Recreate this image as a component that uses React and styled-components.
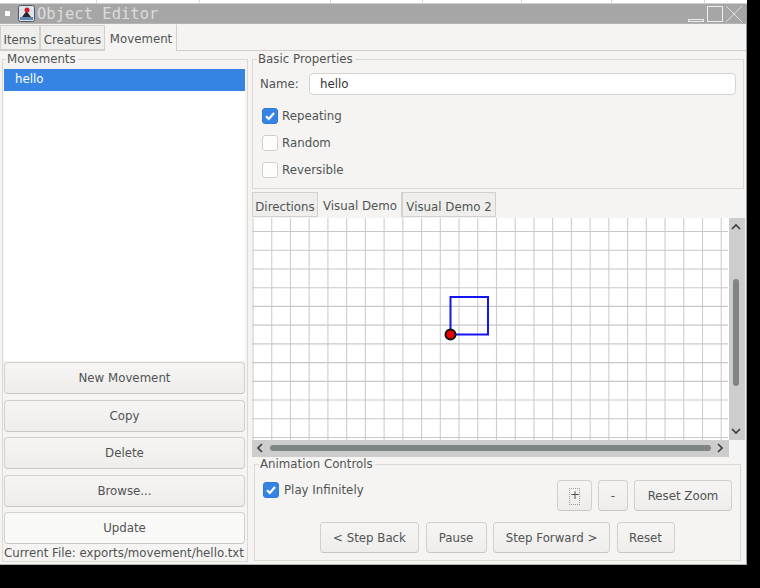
import React from 'react';
import styled, { createGlobalStyle } from 'styled-components';

const TEXT_SIZE = '11.8px';

const GlobalStyle = createGlobalStyle`
  html, body { margin: 0; padding: 0; background: #000; }
  body { font-family: "DejaVu Sans", "Liberation Sans", sans-serif; font-size: ${TEXT_SIZE}; color: #505353; }
`;

// --- desktop ---
const Desktop = styled.div`
  width: 760px;
  height: 588px;
  background: #000;
  overflow: hidden;
`;
const BehindStrip = styled.div`
  display: flex;
  width: 747px;
  height: 4px;
  box-sizing: border-box;
  background: #fff;
  border-bottom: 1px solid #d0d0d0;
`;
const BehindCell = styled.div`
  width: ${p => p.$w}px;
  border-right: 1px solid #d8d8d8;
`;
const Win = styled.div`
  width: 747px;
  height: 561px;
  box-sizing: border-box;
  background: #f5f4f2;
  border-right: 1px solid #9a9a9a;
  border-bottom: 1px solid #b5b5b5;
  display: flex;
  flex-direction: column;
`;

// --- title bar ---
const TitleBar = styled.div`
  height: 19px;
  background: #a6a6a6;
  display: flex;
  align-items: center;
  color: #dcdcdc;
  flex: none;
  border-bottom: 1px solid #b4b4b4;
`;
const MenuDot = styled.span`
  width: 5px;
  height: 5px;
  background: #fff;
  margin-left: 5px;
`;
const TitleText = styled.span`
  font-family: "DejaVu Sans Mono", monospace;
  font-size: 15.5px;
  margin-left: 2px;
  flex: 1;
`;
const WinButtons = styled.svg`
  display: block;
  margin-right: 1px;
`;
const AppIconSvg = styled.svg`
  display: block;
  margin-left: 8px;
`;

// --- tabs ---
const TabBar = styled.div`
  display: flex;
  align-items: flex-end;
  height: ${p => p.$h}px;
  flex: none;
  border-bottom: 1px solid ${p => (p.$plain ? 'transparent' : '#cfccc8')};
  box-sizing: border-box;
`;
const Tab = styled.div`
  box-sizing: border-box;
  width: ${p => p.$w}px;
  height: ${p => (p.$active ? p.$h + 1 : p.$h - 1)}px;
  margin-bottom: ${p => (p.$active ? -1 : 0)}px;
  background: ${p => (p.$active ? '#f5f4f2' : '#efeeec')};
  border: 1px solid #d3d0cc;
  border-bottom: ${p => (p.$active ? 'none' : '1px solid #d3d0cc')};
  border-top-color: ${p => (p.$active ? 'transparent' : '#d3d0cc')};
  border-left-color: ${p => (p.$active ? 'transparent' : '#d3d0cc')};
  line-height: ${p => p.$h + 3}px;
  text-align: center;
  white-space: nowrap;
  overflow: hidden;
`;

// --- body ---
const Body = styled.div`
  flex: 1;
  min-height: 0;
  display: flex;
  gap: 4px;
  padding: 2px;
`;
const Group = styled.fieldset`
  margin: 0;
  min-width: 0;
  box-sizing: border-box;
  border: 1px solid #dcd9d5;
  padding: ${p => p.$pad};
  display: flex;
  flex-direction: column;
`;
const GroupTitle = styled.legend`
  padding: 0 2px 0 1px;
  margin-left: ${p => p.$x}px;
  line-height: 12px;
`;
const LeftGroup = styled(Group)`
  width: 246px;
  height: 509px;
  flex: none;
`;
const MovementList = styled.div`
  flex: 1;
  background: #fff;
`;
const ListRow = styled.div`
  height: 22px;
  line-height: 21px;
  padding-left: 11px;
  background: #3584e4;
  color: #fff;
`;
const ButtonStack = styled.div`
  display: flex;
  flex-direction: column;
  gap: 5.5px;
  margin-top: 1px;
`;
const Btn = styled.div`
  box-sizing: border-box;
  width: ${p => (p.$w ? `${p.$w}px` : 'auto')};
  height: ${p => p.$h || 32}px;
  line-height: ${p => (p.$h || 32) - 1}px;
  text-align: center;
  border: 1px solid #d3d0cb;
  border-bottom-color: #c9c6c1;
  border-radius: 4px;
  background: ${p => (p.$flat ? '#f9f9f8' : 'linear-gradient(#f6f5f4, #eeedeb)')};
  white-space: nowrap;
`;
const CurrentFile = styled.div`
  line-height: 16px;
  margin-top: 1px;
  white-space: nowrap;
`;

const RightCol = styled.div`
  flex: 1;
  min-width: 0;
  display: flex;
  flex-direction: column;
`;
const BasicGroup = styled(Group)`
  height: 136px;
  flex: none;
`;
const NameRow = styled.div`
  display: flex;
  align-items: center;
  height: 22px;
  margin-bottom: 13px;
`;
const NameLabel = styled.span`
  width: 49px;
  flex: none;
`;
const NameInput = styled.div`
  flex: 1;
  box-sizing: border-box;
  height: 22px;
  margin-right: 7px;
  padding-left: 10px;
  line-height: 21px;
  background: #fff;
  border: 1px solid #d6d3cf;
  border-radius: 4px;
  color: #333;
`;
const CheckRow = styled.div`
  display: flex;
  align-items: center;
  gap: ${p => p.$gap}px;
  height: 15px;
  margin-left: ${p => p.$ml || 0}px;
  margin-top: ${p => p.$mt || 0}px;
  margin-bottom: ${p => p.$mb || 0}px;
`;
const Box = styled.span`
  box-sizing: border-box;
  width: 16px;
  height: 16px;
  flex: none;
  border-radius: 3px;
  border: 1px solid ${p => (p.$on ? '#2f7ad8' : '#d3d0cb')};
  background: ${p => (p.$on ? '#3584e4' : '#fdfdfc')};
  display: flex;
  align-items: center;
  justify-content: center;
`;

const DemoPane = styled.div`
  display: flex;
  flex-direction: column;
  flex: none;
  margin-top: 2px;
`;
const ScrollArea = styled.div`
  display: grid;
  grid-template-columns: 477px 16px;
  grid-template-rows: 222px 17px;
`;
const GridCanvas = styled.svg`
  display: block;
  background: #fff;
`;
const VTrack = styled.div`
  background: #cdcdcd;
  position: relative;
`;
const VThumb = styled.div`
  position: absolute;
  top: 61px;
  left: 4px;
  width: 6px;
  height: 107px;
  border-radius: 3px;
  background: #7f8585;
`;
const HTrack = styled.div`
  background: #cdcdcd;
  position: relative;
`;
const HThumb = styled.div`
  position: absolute;
  left: 18px;
  top: 5px;
  width: 441px;
  height: 6px;
  border-radius: 3px;
  background: #7f8585;
`;
const Arrow = styled.svg`
  position: absolute;
  display: block;
`;

const ControlsGroup = styled(Group)`
  height: 103px;
  margin: 1px 3px 0 2px;
`;
const TopControls = styled.div`
  display: flex;
  align-items: flex-start;
  height: 42px;
`;
const Spacer = styled.div`
  flex: 1;
`;
const ZoomButtons = styled.div`
  display: flex;
  gap: 6px;
  margin-right: 8px;
`;
const PlusMark = styled.span`
  display: inline-block;
  width: 9px;
  height: 15px;
  line-height: 13px;
  border: 1px dotted #9c9c9c;
  vertical-align: middle;
`;
const StepRow = styled.div`
  display: flex;
  gap: 6.5px;
  padding-left: 57px;
`;

const behindCells = [96, 102, 130, 91, 98, 89, 92];
const COLS = 26;
const ROWS = 12;
const STEP = 18.73;

function DemoGrid() {
  const verticals = Array.from({ length: COLS }, (_, i) => 1 + i * STEP);
  const horizontals = Array.from({ length: ROWS }, (_, i) => 13.5 + i * STEP);
  return (
    <GridCanvas width="477" height="222" viewBox="0 0 477 222">
      {verticals.map(x => <line key={x} x1={x} x2={x} y1="0" y2="222" stroke="#cdcdcd" strokeWidth="1.1" />)}
      {horizontals.map(y => <line key={y} x1="0" x2="476" y1={y} y2={y} stroke="#c8c8c8" strokeWidth="1.1" />)}
      <rect x="198.5" y="79" width="37.5" height="37.5" fill="none" stroke="#1414f0" strokeWidth="2" />
      <circle cx="198.5" cy="116.5" r="5" fill="#e60000" stroke="#111" strokeWidth="2" />
    </GridCanvas>
  );
}

function Check() {
  return (
    <svg width="12" height="12" viewBox="0 0 12 12">
      <path d="M2 6.2 L4.8 9 L10 3" fill="none" stroke="#fff" strokeWidth="2.2" />
    </svg>
  );
}

function AppIcon() {
  return (
    <AppIconSvg width="17" height="17" viewBox="0 0 17 17">
      <rect x="0.5" y="0.5" width="16" height="16" rx="2" fill="#dfe5ea" stroke="#4a5a6e" />
      <path d="M4 12 L8.5 6 L13 12 Z" fill="#26282c" />
      <rect x="2" y="12" width="13" height="3" fill="#5f86b3" />
      <circle cx="9" cy="5" r="2.5" fill="#d01c2a" />
    </AppIconSvg>
  );
}

export default function App() {
  return (
    <Desktop>
      <GlobalStyle />
      <BehindStrip>
        {behindCells.map((w, i) => <BehindCell key={i} $w={w} />)}
      </BehindStrip>
      <Win>
        <TitleBar>
          <MenuDot />
          <AppIcon />
          <TitleText>Object Editor</TitleText>
          <WinButtons width="58" height="18" viewBox="0 0 58 18">
            <rect x="1.5" y="14.5" width="15" height="2" fill="none" stroke="#eee" />
            <rect x="20.5" y="1.5" width="15" height="15" fill="none" stroke="#eee" />
            <path d="M39 1 L55 17 M55 1 L39 17" stroke="#ddd" strokeWidth="1" />
          </WinButtons>
        </TitleBar>
        <TabBar $h={27}>
          <Tab $w={40} $h={26}>Items</Tab>
          <Tab $w={65} $h={26}>Creatures</Tab>
          <Tab $w={72} $h={26} $active>Movement</Tab>
        </TabBar>
        <Body>
          <LeftGroup $pad="4px 2px 0 1px">
            <GroupTitle $x={2}>Movements</GroupTitle>
            <MovementList>
              <ListRow>hello</ListRow>
            </MovementList>
            <ButtonStack>
              <Btn>New Movement</Btn>
              <Btn>Copy</Btn>
              <Btn>Delete</Btn>
              <Btn>Browse...</Btn>
              <Btn $flat>Update</Btn>
            </ButtonStack>
            <CurrentFile>Current File: exports/movement/hello.txt</CurrentFile>
          </LeftGroup>
          <RightCol>
            <BasicGroup $pad="8px 0 0 7px">
              <GroupTitle $x={-3}>Basic Properties</GroupTitle>
              <NameRow>
                <NameLabel>Name:</NameLabel>
                <NameInput>hello</NameInput>
              </NameRow>
              <CheckRow $gap={4} $ml={2} $mb={12}><Box $on><Check /></Box>Repeating</CheckRow>
              <CheckRow $gap={4} $ml={2} $mb={12}><Box />Random</CheckRow>
              <CheckRow $gap={4} $ml={2}><Box />Reversible</CheckRow>
            </BasicGroup>
            <DemoPane>
              <TabBar $h={27} $plain>
                <Tab $w={66} $h={26}>Directions</Tab>
                <Tab $w={84} $h={26} $active>Visual Demo</Tab>
                <Tab $w={94} $h={26}>Visual Demo 2</Tab>
              </TabBar>
              <ScrollArea>
                <DemoGrid />
                <VTrack>
                  <Arrow width="10" height="7" viewBox="0 0 10 7" style={{ top: 5, left: 2 }}>
                    <path d="M1 6 L5 2 L9 6" fill="none" stroke="#3a3f3f" strokeWidth="1.7" />
                  </Arrow>
                  <VThumb />
                  <Arrow width="10" height="7" viewBox="0 0 10 7" style={{ bottom: 5, left: 2 }}>
                    <path d="M1 1 L5 5 L9 1" fill="none" stroke="#3a3f3f" strokeWidth="1.7" />
                  </Arrow>
                </VTrack>
                <HTrack>
                  <Arrow width="7" height="10" viewBox="0 0 7 10" style={{ top: 3, left: 4 }}>
                    <path d="M6 1 L2 5 L6 9" fill="none" stroke="#3a3f3f" strokeWidth="1.7" />
                  </Arrow>
                  <HThumb />
                  <Arrow width="7" height="10" viewBox="0 0 7 10" style={{ top: 3, right: 5 }}>
                    <path d="M1 1 L5 5 L1 9" fill="none" stroke="#3a3f3f" strokeWidth="1.7" />
                  </Arrow>
                </HTrack>
              </ScrollArea>
            </DemoPane>
            <ControlsGroup $pad="10px 0 0 8px">
              <GroupTitle $x={-4}>Animation Controls</GroupTitle>
              <TopControls>
                <CheckRow $gap={5} $mt={2}><Box $on><Check /></Box>Play Infinitely</CheckRow>
                <Spacer />
                <ZoomButtons>
                  <Btn $w={35} $h={31}><PlusMark>+</PlusMark></Btn>
                  <Btn $w={30} $h={31}>-</Btn>
                  <Btn $w={98} $h={31}>Reset Zoom</Btn>
                </ZoomButtons>
              </TopControls>
              <StepRow>
                <Btn $w={99} $h={31}>&lt; Step Back</Btn>
                <Btn $w={61} $h={31}>Pause</Btn>
                <Btn $w={117} $h={31}>Step Forward &gt;</Btn>
                <Btn $w={58} $h={31}>Reset</Btn>
              </StepRow>
            </ControlsGroup>
          </RightCol>
        </Body>
      </Win>
    </Desktop>
  );
}
